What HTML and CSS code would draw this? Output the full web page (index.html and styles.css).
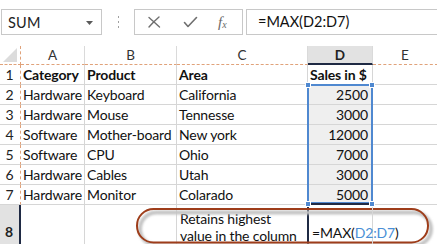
FILE: index.html
```html
<!DOCTYPE html>
<html>
<head>
<meta charset="utf-8">
<link rel="stylesheet" href="styles.css">
</head>
<body>
<div class="app">
  <div class="fbar">
    <div class="namebox">
      <span class="nametext">SUM</span>
      <svg class="ddarrow" width="7" height="4" viewBox="0 0 7 4"><path d="M0 0H7L3.5 4Z" fill="#5a5a5a"/></svg>
    </div>
    <div class="grip"><i></i><i></i><i></i></div>
    <div class="btns">
      <svg class="ico" width="14" height="14" viewBox="0 0 14 14"><path d="M2 2.5C5 5 8 8 12.5 12M12 2C8 5.5 5 8.5 2 12" stroke="#6f6f6f" stroke-width="1.4" fill="none" stroke-linecap="round"/></svg>
      <svg class="ico" width="15" height="14" viewBox="0 0 15 14"><path d="M1.5 7.5L5 11.5L13.5 2.5" stroke="#6f6f6f" stroke-width="1.6" fill="none" stroke-linecap="round" stroke-linejoin="round"/></svg>
      <span class="fx">f<sub>x</sub></span>
    </div>
    <div class="finput">=MAX(D2:D7)</div>
  </div>

  <div class="sheet">
    <div class="corner"><svg width="14" height="14" viewBox="0 0 14 14"><path d="M14 0V14H0Z" fill="#dcdcdc"/></svg></div>
    <div class="ch">A</div>
    <div class="ch">B</div>
    <div class="ch">C</div>
    <div class="ch chsel">D</div>
    <div class="ch">E</div>

    <div class="rh">1</div>
    <div class="c b">Category</div>
    <div class="c b">Product</div>
    <div class="c b">Area</div>
    <div class="c b">Sales in $</div>
    <div class="c"></div>

    <div class="rh">2</div>
    <div class="c">Hardware</div>
    <div class="c">Keyboard</div>
    <div class="c">California</div>
    <div class="c n sel">2500</div>
    <div class="c"></div>

    <div class="rh">3</div>
    <div class="c">Hardware</div>
    <div class="c">Mouse</div>
    <div class="c">Tennesse</div>
    <div class="c n sel">3000</div>
    <div class="c"></div>

    <div class="rh">4</div>
    <div class="c">Software</div>
    <div class="c">Mother-board</div>
    <div class="c">New york</div>
    <div class="c n sel">12000</div>
    <div class="c"></div>

    <div class="rh">5</div>
    <div class="c">Software</div>
    <div class="c">CPU</div>
    <div class="c">Ohio</div>
    <div class="c n sel">7000</div>
    <div class="c"></div>

    <div class="rh">6</div>
    <div class="c">Hardware</div>
    <div class="c">Cables</div>
    <div class="c">Utah</div>
    <div class="c n sel">3000</div>
    <div class="c"></div>

    <div class="rh">7</div>
    <div class="c">Hardware</div>
    <div class="c">Monitor</div>
    <div class="c">Colarado</div>
    <div class="c n sel">5000</div>
    <div class="c"></div>

    <div class="rh rhsel">8</div>
    <div class="c tall"></div>
    <div class="c tall"></div>
    <div class="c tall wrap">Retains highest value in the column</div>
    <div class="c tall edit">=MAX(<span class="ref">D2:D7</span>)<span class="caret"></span></div>
    <div class="c tall"></div>
  </div>

  <div class="selbox"></div>
  <div class="handle h1"></div>
  <div class="handle h2"></div>
  <div class="handle h3"></div>
  <div class="handle h4"></div>
  <div class="active"></div>

  <svg class="oval" width="307" height="41" viewBox="0 0 307 41">
    <defs><filter id="bl" x="-10%" y="-50%" width="120%" height="200%"><feGaussianBlur stdDeviation="0.8"/></filter></defs>
    <rect x="10" y="9.5" width="291" height="33" rx="16.5" fill="none" stroke="#c4c4c4" stroke-width="4" filter="url(#bl)"/>
    <rect x="7" y="6" width="291" height="33.5" rx="16.5" fill="none" stroke="#9e3d1a" stroke-width="2"/>
  </svg>
</div>
</body>
</html>
```

FILE: styles.css
```css
* { box-sizing: border-box; }
html, body { margin: 0; padding: 0; background: #fff; }
body { width: 437px; height: 244px; overflow: hidden; font-family: Lato, "Liberation Sans", sans-serif; color: #111; }
.app { position: relative; width: 437px; height: 244px; overflow: hidden; background: #fff; }

.fbar { display: flex; align-items: center; height: 46px; padding: 9px 0 11px 1px; }
.namebox { width: 101px; height: 26px; border: 1px solid #c8c8c8; display: flex; align-items: center; justify-content: space-between; padding: 0 8px 0 6px; }
.nametext { font-size: 14.5px; color: #222; letter-spacing: 0.2px; }
.ddarrow { margin-top: 1px; }
.grip { width: 32px; display: flex; flex-direction: column; align-items: center; gap: 3px; }
.grip i { display: block; width: 1px; height: 2px; background: #a0a0a0; }
.btns { width: 109px; height: 26px; border: 1px solid #c8c8c8; display: flex; align-items: center; padding-left: 12px; gap: 22px; }
.fx { font-family: "Liberation Serif", serif; font-style: italic; font-size: 15px; color: #6a6a6a; line-height: 1; margin-left: -2px; }
.fx sub { font-size: 10px; vertical-align: -1px; }
.finput { flex: 1; height: 26px; margin-left: 3px; border: 1px solid #c8c8c8; border-right: none; font-size: 14.5px; padding: 2px 0 0 11px; color: #111; line-height: 20px; }

.sheet { display: grid; grid-template-columns: 21px 64px 92px 131px 65px 65px; grid-template-rows: 19px repeat(7, 20px) 40px; font-size: 14px; letter-spacing: -0.15px; }
.corner { border-bottom: 1px dashed #e0a27a; border-right: 1px dashed #e0a27a; display: flex; align-items: flex-end; justify-content: flex-end; padding: 0 3px 2px 0; }
.ch { border-bottom: 1px dashed #e0a27a; border-right: 1px solid #dadada; text-align: center; font-size: 13.5px; color: #333; line-height: 19px; letter-spacing: 0; }
.chsel { background: #e2e2e2; border-bottom: 2px solid #1f2a44; font-weight: bold; color: #222; }
.rh { border-right: 1px dashed #e0a27a; border-bottom: 1px solid #d6d6d6; text-align: center; line-height: 20px; color: #222; padding-right: 1px; }
.rhsel { background: #e2e2e2; border-right: 2px solid #1f2a44; font-weight: bold; display: flex; align-items: flex-end; justify-content: center; line-height: 18px; padding-bottom: 3px; }
.c { border-right: 1px solid #d6d6d6; border-bottom: 1px solid #d6d6d6; padding: 0 2px; line-height: 19px; white-space: nowrap; overflow: hidden; }
.b { font-weight: bold; }
.n { text-align: right; padding-right: 4px; }
.sel { background: #efefef; }
.tall { line-height: 17px; }
.wrap { white-space: normal; padding: 5px 2px 0 3px; }
.edit { display: flex; align-items: flex-end; padding: 0 0 3px 4px; overflow: visible; position: relative; z-index: 1; }
.ref { color: #4a8fd6; }
.caret { display: inline-block; width: 1px; height: 17px; background: #222; margin-left: 1px; margin-bottom: 0; }

.selbox { position: absolute; left: 307px; top: 84px; width: 66px; height: 120px; border: 2px solid #4f88d0; }
.handle { position: absolute; width: 6px; height: 6px; background: #4f88d0; border: 1px solid #fff; }
.h1 { left: 305px; top: 82px; }
.h2 { left: 369px; top: 82px; }
.h3 { left: 305px; top: 201px; }
.h4 { left: 369px; top: 201px; }
.active { position: absolute; left: 307px; top: 203px; width: 66px; height: 50px; border-top: 2px solid #1f2a44; border-left: 2px solid #1f2a44; }
.h3, .h4 { z-index: 2; }
.oval { position: absolute; left: 130px; top: 203px; }
```
